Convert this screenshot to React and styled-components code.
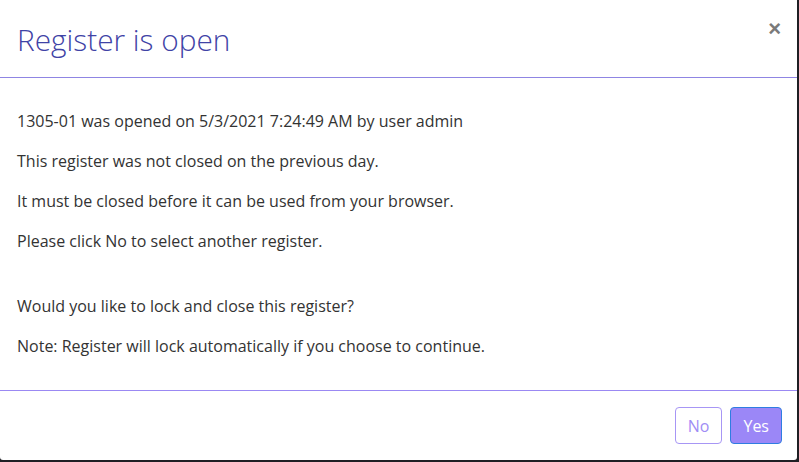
import React from "react";
import styled, { createGlobalStyle } from "styled-components";

const Global = createGlobalStyle`
  html, body { margin: 0; padding: 0; }
  body {
    background: #1f1f24;
    font-family: "Open Sans", "Liberation Sans", sans-serif;
    width: 799px;
    height: 462px;
    overflow: hidden;
  }
`;

const Modal = styled.div`
  width: 797px;
  height: 460px;
  background: #fff;
  border-radius: 0 0 3px 3px;
  display: flex;
  flex-direction: column;
  box-sizing: border-box;
`;

const Header = styled.div`
  height: 77px;
  border-bottom: 1px solid #8f85e3;
  display: flex;
  align-items: center;
  justify-content: space-between;
  padding: 0 16px 0 17px;
  box-sizing: content-box;
`;

const Title = styled.h4`
  margin: 0;
  font-family: "Open Sans", sans-serif;
  font-weight: 300;
  font-size: 29.8px;
  line-height: 36px;
  color: #3f43a6;
  padding-top: 3px;
`;

const Close = styled.button`
  border: 0;
  background: none;
  padding: 0;
  margin-top: -20px;
  font-family: "Liberation Sans", Arial, sans-serif;
  font-weight: 700;
  font-size: 22px;
  line-height: 1;
  color: #7a7a7a;
  cursor: pointer;
`;

const Body = styled.div`
  flex: 1;
  padding: 32px 17px 0;
  display: flex;
  flex-direction: column;
  gap: 18px;
`;

const Para = styled.p`
  margin: 0;
  font-size: 16px;
  line-height: 22px;
  color: #333;
  margin-top: ${(p) => (p.$gap ? "25px" : "0")};
`;

const Footer = styled.div`
  border-top: 1px solid #9b89f3;
  padding: 16px 15px 16px;
  display: flex;
  justify-content: flex-end;
  gap: 8px;
`;

const Button = styled.button`
  height: 37px;
  padding: 0 12px;
  border-radius: 4px;
  font-family: "Open Sans", sans-serif;
  font-size: 16px;
  cursor: pointer;
  box-sizing: border-box;
  border: 1px solid ${(p) => (p.$primary ? "#2f7de1" : "#a796f5")};
  background: ${(p) => (p.$primary ? "#9b87f7" : "#fff")};
  color: ${(p) => (p.$primary ? "#fff" : "#a08df5")};
`;

export default function App() {
  return (
    <>
      <Global />
      <Modal>
        <Header>
          <Title>Register is open</Title>
          <Close aria-label="Close">×</Close>
        </Header>
        <Body>
          <Para>1305-01 was opened on 5/3/2021 7:24:49 AM by user admin</Para>
          <Para>This register was not closed on the previous day.</Para>
          <Para>It must be closed before it can be used from your browser.</Para>
          <Para>Please click No to select another register.</Para>
          <Para $gap>Would you like to lock and close this register?</Para>
          <Para>Note: Register will lock automatically if you choose to continue.</Para>
        </Body>
        <Footer>
          <Button>No</Button>
          <Button $primary>Yes</Button>
        </Footer>
      </Modal>
    </>
  );
}
